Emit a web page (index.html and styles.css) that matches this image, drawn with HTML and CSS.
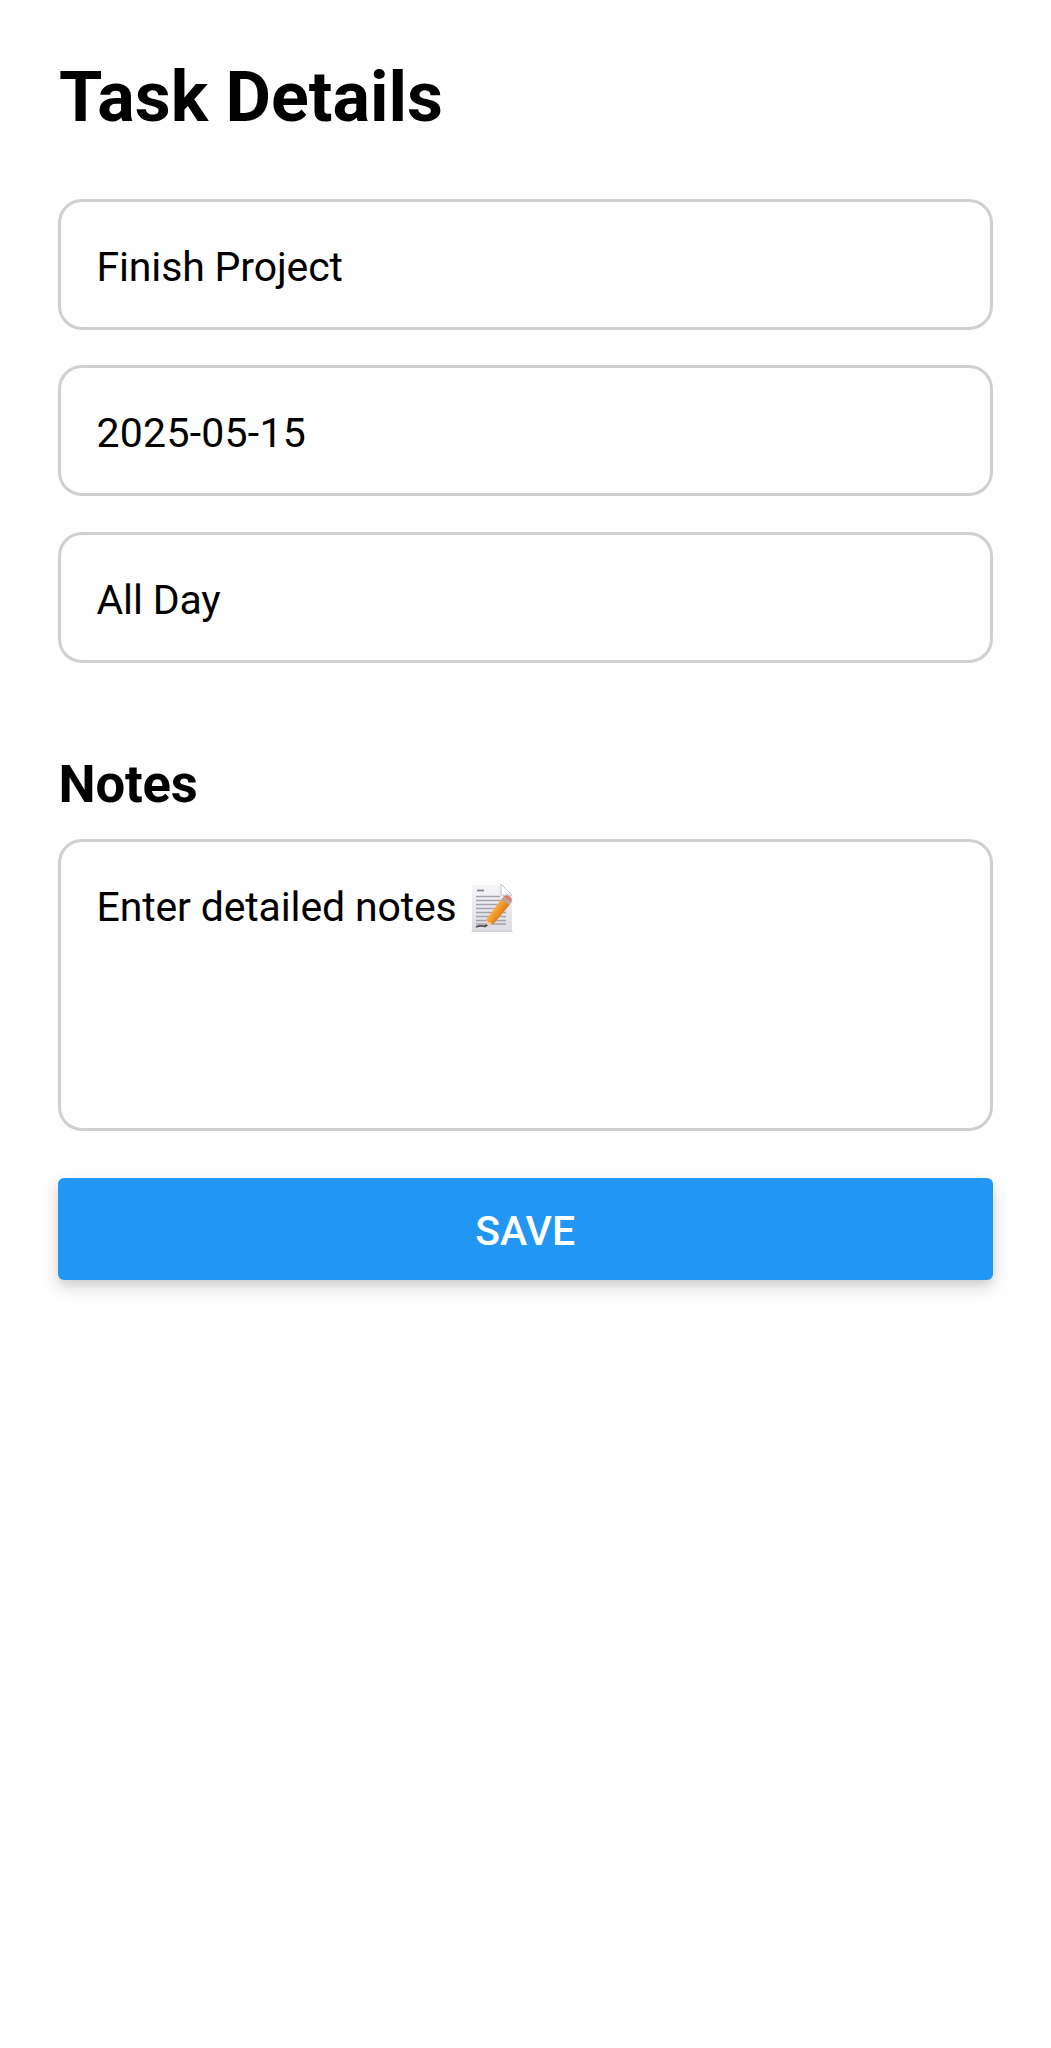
FILE: index.html
```html
<!DOCTYPE html>
<html lang="en">
<head>
<meta charset="utf-8">
<title>Task Details</title>
<link rel="stylesheet" href="styles.css">
</head>
<body>
<main class="screen">
  <h1 class="title">Task Details</h1>
  <div class="fields">
    <div class="field">Finish Project</div>
    <div class="field field-date">2025-05-15</div>
    <div class="field">All Day</div>
  </div>
  <h2 class="subtitle">Notes</h2>
  <div class="notes">
    <span>Enter detailed notes</span>
    <svg class="memo" viewBox="0 0 44 50" aria-hidden="true">
      <defs>
        <linearGradient id="paper" x1="0" y1="0" x2="0" y2="1">
          <stop offset="0" stop-color="#f5f5f9"/>
          <stop offset="1" stop-color="#dcdce4"/>
        </linearGradient>
        <linearGradient id="wood" gradientUnits="userSpaceOnUse" x1="21" y1="23" x2="31" y2="30">
          <stop offset="0" stop-color="#ffc457"/>
          <stop offset=".55" stop-color="#f9a02c"/>
          <stop offset="1" stop-color="#e08420"/>
        </linearGradient>
      </defs>
      <path d="M2 2H31L42 12V48H2Z" fill="url(#paper)"/>
      <path d="M1.500 47.500H42.500V49H1.500Z" fill="#d0d0d6"/>
      <path d="M31 1V12H42Z" fill="#fff" stroke="#c2c2ca" stroke-width="1"/>
      <path d="M7 7.500H14" stroke="#85858d" stroke-width="1.800"/>
      <path d="M6 13.500H30M6 17.500H36M6 21.500H36M6 25.500H36M6 29.500H36M6 33.500H36M6 37.500H36M6 41H36" stroke="#a3a3ac" stroke-width="1.400"/>
      <path d="M6 44Q10 42 16 43.500" fill="none" stroke="#4e4e58" stroke-width="1.800"/>
      <path d="M16.500 36L23 40.500L15 44Z" fill="#f0cfa0"/>
      <path d="M15.700 41L18 42.600L14.500 44.500Z" fill="#3d3431"/>
      <path d="M16.500 36L32 15.500L40 21.500L24 40.500Q22 42 20.500 39.500Q17 39.500 16.500 36Z" fill="url(#wood)"/>
      <path d="M31.500 16.200L33.300 13.800L41 19.800L39.300 22.200Z" fill="#b9a7a5"/>
      <path d="M33.300 13.800Q36.500 11 40 13.500Q43 16 41 19.800Z" fill="#d98074"/>
    </svg>
  </div>
  <button class="save" type="button">SAVE</button>
</main>
</body>
</html>
```
FILE: styles.css
```css
* {
  box-sizing: border-box;
}

body {
  margin: 0;
  background: #fefefe;
  color: #000;
  font-family: Roboto, "Liberation Sans", sans-serif;
}

.screen {
  min-height: 2048px;
  padding: 56px 58.500px 0 58px;
}

.title {
  margin: 0 0 61px;
  padding-left: 1px;
  font-size: 70px;
  line-height: 82px;
  font-weight: 700;
}

.fields {
  display: flex;
  flex-direction: column;
  gap: 35.250px;
}

.field,
.notes {
  border: 3px solid #d0d0d0;
  border-radius: 24px;
  font-size: 41px;
  line-height: 48px;
  letter-spacing: -.15px;
}

.field {
  display: flex;
  align-items: center;
  height: 131px;
  padding: 5px 36px 0 35.500px;
}

.field-date {
  letter-spacing: .25px;
}

.subtitle {
  margin: 90.500px 0 24px;
  padding-left: .5px;
  font-size: 52.600px;
  line-height: 62px;
  font-weight: 700;
  letter-spacing: -.2px;
}

.notes {
  display: flex;
  align-items: flex-start;
  gap: 13px;
  height: 292px;
  padding: 41px 36px 0 35.500px;
}

.memo {
  width: 44px;
  height: 50px;
}

.save {
  display: block;
  width: 100%;
  height: 102px;
  margin-top: 47px;
  padding: 4px 0 0;
  border: 0;
  border-radius: 6px;
  background: #2196f3;
  box-shadow: 0 7px 18px rgba(0, 0, 0, .15), 0 5px 7px rgba(0, 0, 0, .06);
  color: #fff;
  font: 500 41px/48px Roboto, "Liberation Sans", sans-serif;
}
```
